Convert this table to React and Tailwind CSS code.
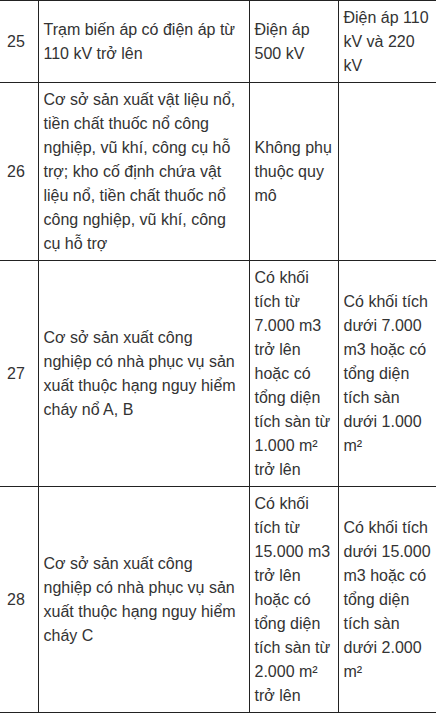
import React from "react";

const rows = [
  {
    n: "25",
    a: "Trạm biến áp có điện áp từ 110 kV trở lên",
    b: "Điện áp 500 kV",
    c: "Điện áp 110 kV và 220 kV",
  },
  {
    n: "26",
    a: "Cơ sở sản xuất vật liệu nổ, tiền chất thuốc nổ công nghiệp, vũ khí, công cụ hỗ trợ; kho cố định chứa vật liệu nổ, tiền chất thuốc nổ công nghiệp, vũ khí, công cụ hỗ trợ",
    b: "Không phụ thuộc quy mô",
    c: "",
  },
  {
    n: "27",
    a: "Cơ sở sản xuất công nghiệp có nhà phục vụ sản xuất thuộc hạng nguy hiểm cháy nổ A, B",
    b: "Có khối tích từ 7.000 m3 trở lên hoặc có tổng diện tích sàn từ 1.000 m² trở lên",
    c: "Có khối tích dưới 7.000 m3 hoặc có tổng diện tích sàn dưới 1.000 m²",
  },
  {
    n: "28",
    a: "Cơ sở sản xuất công nghiệp có nhà phục vụ sản xuất thuộc hạng nguy hiểm cháy C",
    b: "Có khối tích từ 15.000 m3 trở lên hoặc có tổng diện tích sàn từ 2.000 m² trở lên",
    c: "Có khối tích dưới 15.000 m3 hoặc có tổng diện tích sàn dưới 2.000 m²",
  },
];

export default function App() {
  return (
    <div className="w-[436px] h-[714px] overflow-hidden bg-white">
      <table className="w-[437px] table-fixed border-collapse font-['Liberation_Sans',Arial,sans-serif] text-[16px] leading-[24px] text-[#333]">
        <colgroup>
          <col className="w-[38px]" />
          <col className="w-[211px]" />
          <col className="w-[89px]" />
          <col className="w-[99px]" />
        </colgroup>
        <tbody>
          {rows.map((r) => (
            <tr key={r.n}>
              <td className="border-t border-b border-r border-[#222] px-[7px] pt-[5px] pb-[4px] align-middle">{r.n}</td>
              <td className="border border-[#222] px-[5px] pt-[5px] pb-[4px] align-middle">{r.a}</td>
              <td className="border border-[#222] px-[5px] pt-[5px] pb-[4px] align-middle">{r.b}</td>
              <td className="border border-[#222] px-[5px] pt-[5px] pb-[4px] align-middle">{r.c}</td>
            </tr>
          ))}
        </tbody>
      </table>
    </div>
  );
}
